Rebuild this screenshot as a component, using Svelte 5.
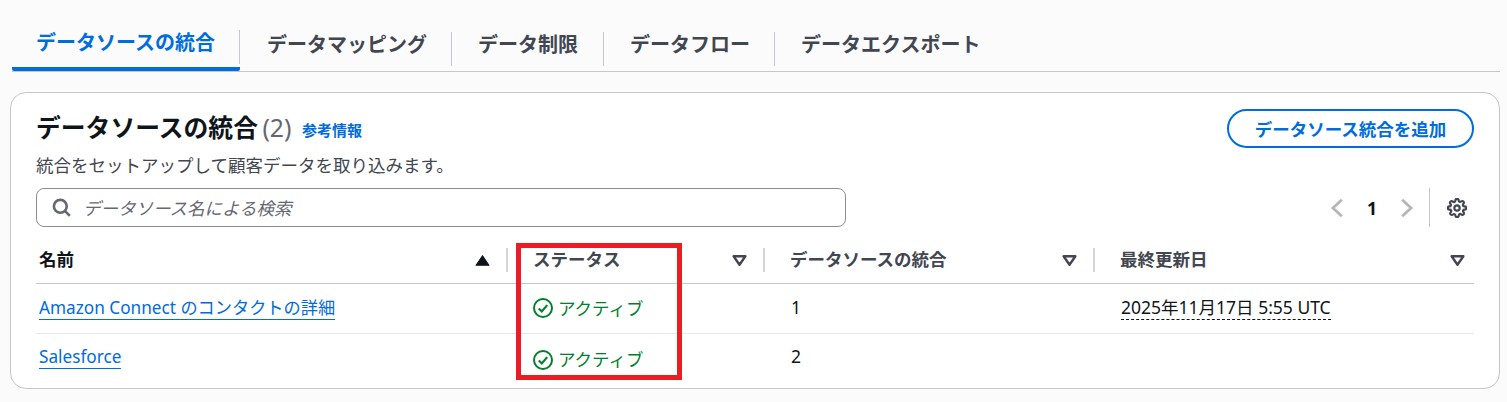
<script>
  const tabs = ['データソースの統合', 'データマッピング', 'データ制限', 'データフロー', 'データエクスポート'];

  const columns = [
    { label: '名前', sorted: true },
    { label: 'ステータス' },
    { label: 'データソースの統合' },
    { label: '最終更新日' }
  ];

  const rows = [
    { name: 'Amazon Connect のコンタクトの詳細', count: 1, updated: '2025年11月17日 5:55 UTC' },
    { name: 'Salesforce', count: 2, updated: '' }
  ];
</script>

<div class="page">
  <div class="tabs">
    {#each tabs as tab, i}
      <button class="tab" class:active={i === 0}><span class="tab-label">{tab}</span></button>
    {/each}
  </div>

  <section class="card">
    <div class="card-header">
      <div>
        <h1>データソースの統合 <span class="count">(2)</span> <a class="info" href="#info">参考情報</a></h1>
        <p class="desc">統合をセットアップして顧客データを取り込みます。</p>
      </div>
      <button class="add-btn">データソース統合を追加</button>
    </div>

    <div class="toolbar">
      <div class="search">
        <svg class="search-icon" viewBox="0 0 16 16" fill="none" stroke="currentColor" stroke-width="2.2">
          <circle cx="7" cy="7" r="5.4"/>
          <path d="M10.8 10.8L15 15"/>
        </svg>
        <span class="placeholder">データソース名による検索</span>
      </div>
      <div class="pager">
        <svg class="chev" viewBox="0 0 16 16" fill="none" stroke="currentColor" stroke-width="2">
          <path d="M11.5 2L5 8l6.5 6"/>
        </svg>
        <span class="page-num">1</span>
        <svg class="chev" viewBox="0 0 16 16" fill="none" stroke="currentColor" stroke-width="2">
          <path d="M4.5 2L11 8l-6.5 6"/>
        </svg>
      </div>
      <div class="settings">
        <svg class="gear" viewBox="0 0 24 24" fill="none" stroke="currentColor" stroke-width="2.6" stroke-linejoin="round">
          <circle cx="12" cy="12" r="3.2"/>
          <path d="M19.4 15a1.65 1.65 0 00.33 1.82l.06.06a2 2 0 11-2.83 2.83l-.06-.06a1.65 1.65 0 00-2.8 1.17V21a2 2 0 01-4 0v-.09a1.65 1.65 0 00-2.82-1.17l-.06.06a2 2 0 11-2.83-2.83l.06-.06A1.65 1.65 0 003.09 14H3a2 2 0 010-4h.09a1.65 1.65 0 001.17-2.82l-.06-.06a2 2 0 112.83-2.83l.06.06A1.65 1.65 0 0010 3.09V3a2 2 0 014 0v.09a1.65 1.65 0 002.82 1.17l.06-.06a2 2 0 112.83 2.83l-.06.06A1.65 1.65 0 0020.91 10H21a2 2 0 010 4h-.09a1.65 1.65 0 00-1.51 1z"/>
        </svg>
      </div>
    </div>

    <table>
      <colgroup>
        <col class="c1" />
        <col class="c2" />
        <col class="c3" />
        <col class="c4" />
      </colgroup>
      <thead>
        <tr>
          {#each columns as col, i}
            <th class:first={i === 0}>
              <div class="th-inner">
                <span class="th-label" class:dark={col.sorted}>{col.label}</span>
                <svg class="sort" viewBox="0 0 14 12">
                  {#if col.sorted}
                    <path d="M7 1.5L13 10.5H1z" fill="#0f141a" stroke="#0f141a" stroke-width="1" stroke-linejoin="round"/>
                  {:else}
                    <path d="M1.5 2h11L7 10z" fill="none" stroke="#424650" stroke-width="2.2" stroke-linejoin="round"/>
                  {/if}
                </svg>
              </div>
            </th>
          {/each}
        </tr>
      </thead>
      <tbody>
        {#each rows as row, i}
          <tr>
            <td class="first"><a class="link" href="#row">{row.name}</a></td>
            <td class="status-cell">
              <span class="status" class:low={i === 1}>
                <svg class="ok" viewBox="0 0 20 20" fill="none" stroke="#00802f" stroke-width="2">
                  <circle cx="10" cy="10" r="9"/>
                  <path d="M5.8 10.5l3 3 5.4-6.4" stroke-width="2.2"/>
                </svg>
                アクティブ
              </span>
            </td>
            <td>{row.count}</td>
            <td>{#if row.updated}<span class="dashed">{row.updated}</span>{/if}</td>
          </tr>
        {/each}
      </tbody>
    </table>
  </section>

  <div class="highlight"></div>
</div>

<style>
  :global(body) {
    margin: 0;
    background: #fbfbfc;
  }

  .page {
    position: relative;
    width: 1507px;
    height: 402px;
    padding: 0 7px 0 10px;
    box-sizing: border-box;
    overflow: hidden;
    font-family: "Noto Sans", "Noto Sans CJK JP", sans-serif;
    font-size: 17.5px;
    color: #0f141a;
    background: #fbfbfc;
  }

  .tabs {
    display: flex;
    height: 72px;
    margin-left: 2px;
    padding-top: 20px;
    box-sizing: border-box;
    border-bottom: 1px solid #c6c6cd;
  }

  .tab {
    position: relative;
    height: 51px;
    padding: 0;
    border: none;
    background: none;
    font: inherit;
    font-size: 20px;
    font-weight: 700;
    color: #424650;
  }

  .tab-label {
    display: block;
    height: 34px;
    margin-top: 6px;
    padding: 0 24px 0 26px;
    line-height: 25px;
    border-right: 1px solid #c6c6cd;
  }

  .tab:first-child .tab-label {
    padding: 0 24px 0 24px;
  }

  .tab:nth-child(2) .tab-label {
    padding-left: 27px;
  }

  .tab:nth-child(3) .tab-label {
    padding-right: 25px;
  }

  .tab:last-child .tab-label {
    border-right: none;
  }

  .tab.active {
    color: #006ce0;
    border-bottom: 4px solid #006ce0;
    border-radius: 2px;
  }

  .card {
    margin-top: 20px;
    height: 297px;
    padding: 0 25px;
    box-sizing: border-box;
    background: #fff;
    border: 1px solid #c6c6cd;
    border-radius: 16px;
  }

  .card-header {
    display: flex;
    justify-content: space-between;
    align-items: flex-start;
    height: 95px;
    padding-top: 16px;
    box-sizing: border-box;
  }

  h1 {
    margin: 0;
    font-size: 24.8px;
    line-height: 36px;
    font-weight: 700;
  }

  .count {
    margin-left: -2px;
    font-weight: 400;
    color: #656871;
  }

  .info {
    margin-left: 4px;
    font-size: 15px;
    color: #006ce0;
    text-decoration: none;
    vertical-align: 1px;
  }

  .desc {
    margin: 5px 0 0;
    font-size: 17.5px;
    line-height: 24px;
    color: #424650;
  }

  .add-btn {
    width: 247px;
    height: 39px;
    border: 2px solid #006ce0;
    border-radius: 20px;
    background: #fff;
    font: inherit;
    font-weight: 700;
    color: #006ce0;
  }

  .toolbar {
    display: flex;
    align-items: center;
    height: 39px;
  }

  .search {
    display: flex;
    align-items: center;
    width: 810px;
    height: 39px;
    box-sizing: border-box;
    padding-left: 15px;
    border: 1px solid #8c8c94;
    border-radius: 8px;
    color: #656871;
  }

  .search-icon {
    width: 19px;
    height: 19px;
    margin-right: 12px;
    color: #656871;
  }

  .placeholder {
    font-style: italic;
    line-height: 34px;
    padding-top: 1px;
    color: #656871;
  }

  .pager {
    display: flex;
    align-items: center;
    margin-left: auto;
    height: 39px;
    padding-right: 11px;
    border-right: 1px solid #c6c6cd;
    color: #b4b4bb;
  }

  .chev {
    width: 22px;
    height: 22px;
  }

  .page-num {
    width: 48px;
    text-align: center;
    font-weight: 700;
    color: #0f141a;
  }

  .settings {
    display: flex;
    justify-content: flex-end;
    width: 44px;
    padding-right: 7px;
    box-sizing: border-box;
    color: #424650;
  }

  .gear {
    width: 20px;
    height: 20px;
  }

  table {
    width: 1438px;
    margin-top: 16px;
    border-collapse: collapse;
    table-layout: fixed;
  }

  .c1 { width: 472px; }
  .c2 { width: 257px; }
  .c3 { width: 330px; }
  .c4 { width: 379px; }

  th {
    height: 40px;
    padding: 0 0 0 26px;
    border-bottom: 1px solid #c6c6cd;
    font-weight: 700;
    text-align: left;
    color: #424650;
  }

  .th-inner {
    display: flex;
    justify-content: space-between;
    align-items: center;
    height: 24px;
    margin-top: -6px;
    padding-right: 16px;
    border-right: 2px solid #d4d4da;
  }

  .th-label {
    line-height: 24px;
    margin-top: -2px;
    margin-left: -1px;
  }

  th:last-child .th-inner {
    border-right: none;
    padding-right: 9px;
  }

  th.first {
    padding-left: 3px;
  }

  th.first .th-label {
    margin-left: 0;
  }

  .dark {
    color: #0f141a;
  }

  .sort {
    width: 15px;
    height: 13px;
  }

  td {
    height: 50px;
    padding: 0 0 4px 26px;
    box-sizing: border-box;
    border-bottom: 1px solid #e8e8ec;
  }

  tr:last-child td {
    height: 49px;
    padding-bottom: 5px;
    border-bottom: none;
  }

  td.first {
    padding-left: 3px;
  }

  td.status-cell,
  tr:last-child td.status-cell {
    padding-top: 1px;
    padding-bottom: 0;
  }

  .link {
    font-size: 17.2px;
    color: #006ce0;
    text-decoration: none;
    border-bottom: 1px solid #006ce0;
  }

  .status {
    display: inline-flex;
    align-items: center;
    gap: 5px;
    margin-left: -1px;
    color: #00802f;
  }

  .status.low {
    padding-top: 3px;
  }

  .ok {
    width: 20px;
    height: 20px;
    margin-top: 2px;
  }

  .status.low .ok {
    margin-top: 4px;
  }

  .dashed {
    border-bottom: 1px dashed #0f141a;
  }

  .highlight {
    position: absolute;
    left: 516px;
    top: 243px;
    width: 166px;
    height: 137px;
    box-sizing: border-box;
    border: 5px solid #ec1c24;
  }
</style>
